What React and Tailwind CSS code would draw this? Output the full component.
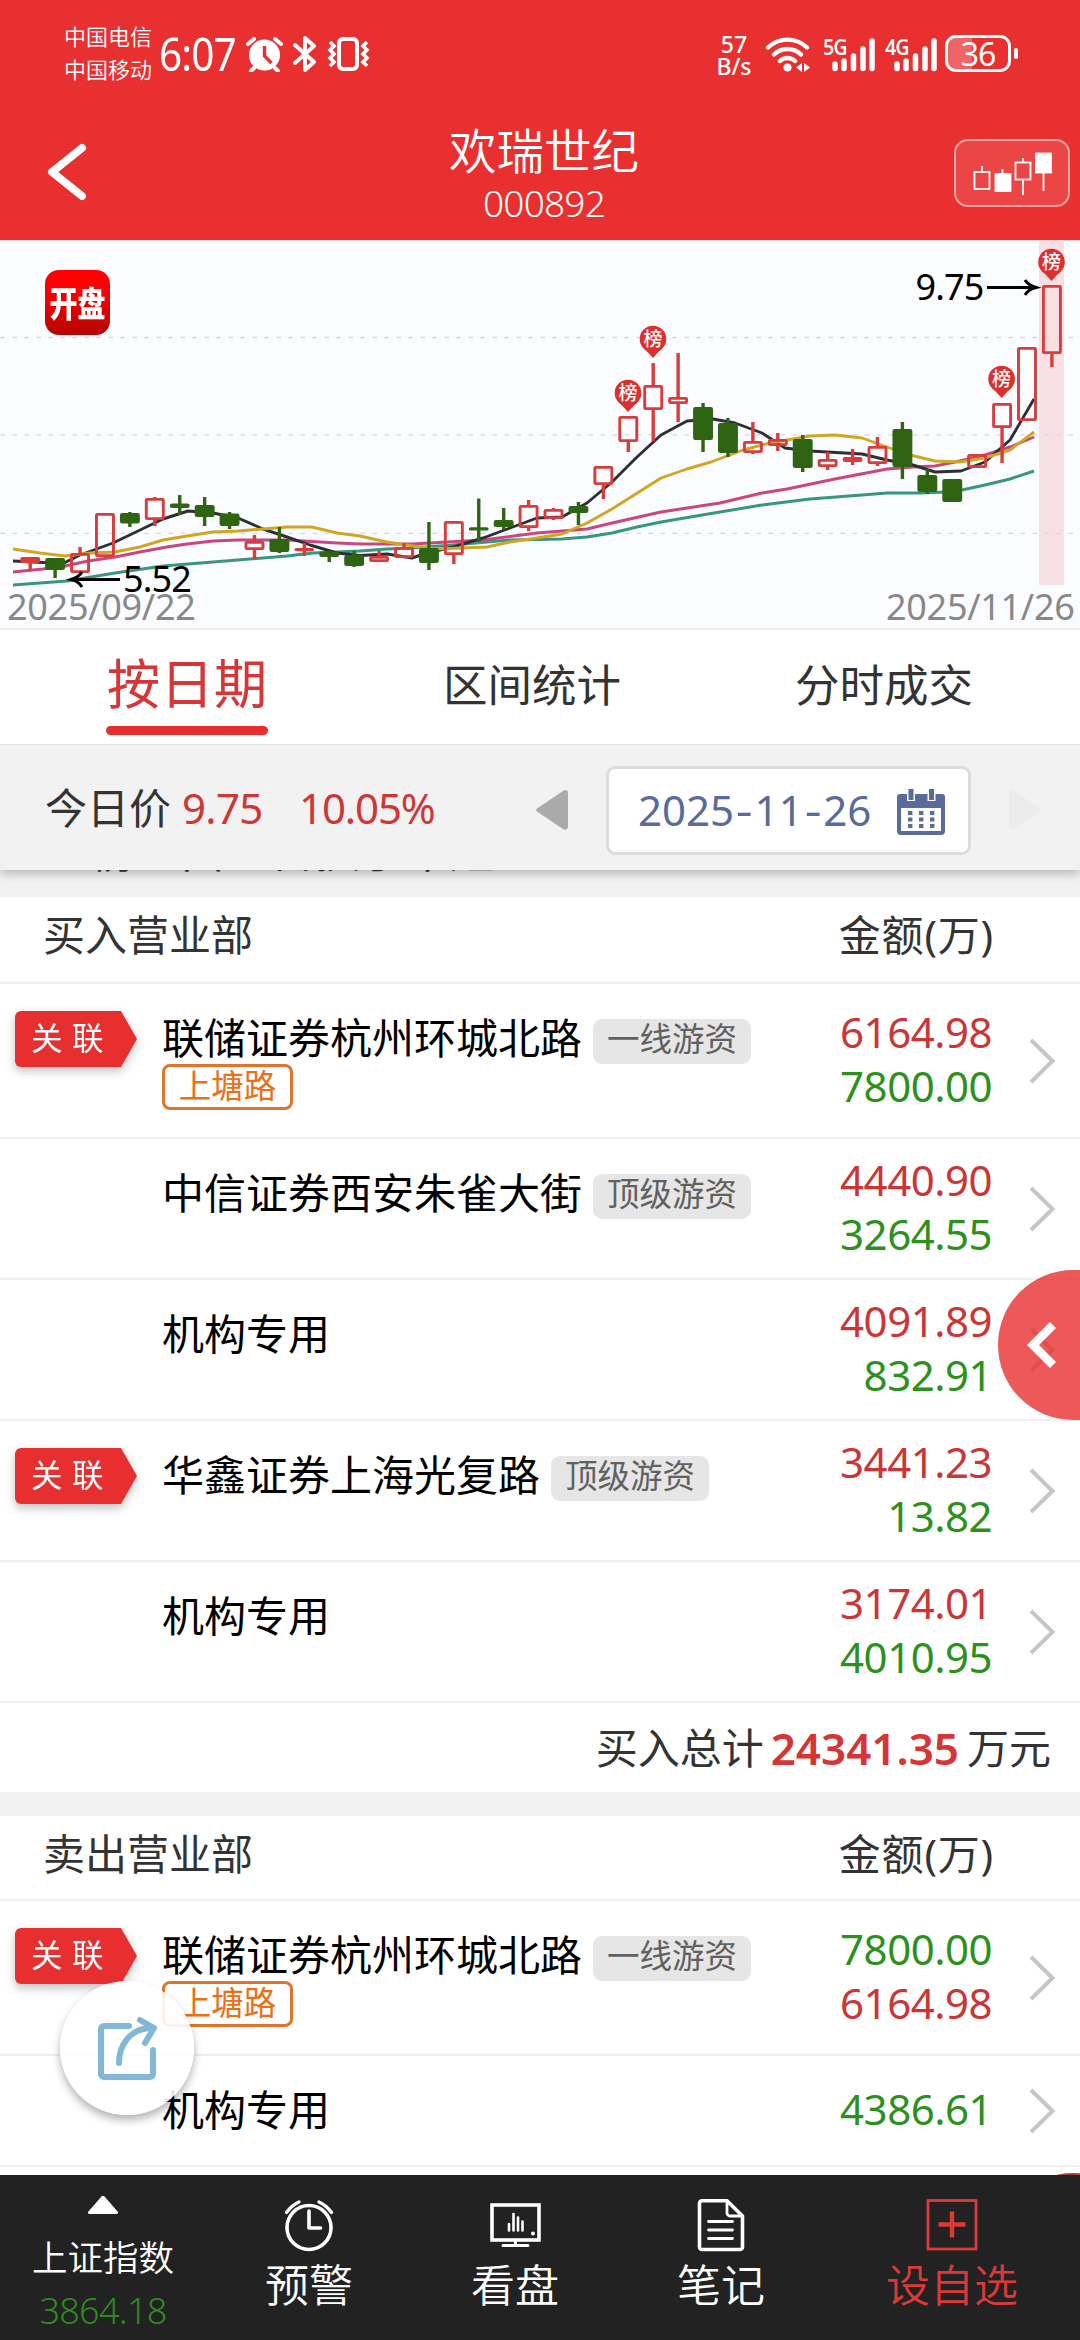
import React from "react";

const RED = "#d83c3c";
const GREEN = "#2f6412";

// [direction, high, bodyTop, bodyBottom, low]; "p" prices up, "g" down
const CANDLES = [
  ["p", 317, 317, 323, 331],
  ["g", 318, 318, 330, 338],
  ["p", 307, 313, 333, 333],
  ["p", 273, 273, 317, 317],
  ["g", 272, 273, 283.5, 287],
  ["p", 257, 258, 280, 286],
  ["g", 255, 263.5, 268, 275],
  ["g", 257, 265, 277, 286],
  ["g", 272, 273.5, 286, 289],
  ["p", 295, 301, 310, 319],
  ["g", 287, 299, 312, 313],
  ["p", 303, 308, 311, 316],
  ["g", 311, 311.5, 317, 322],
  ["g", 311, 315, 326, 327],
  ["p", 311, 316, 322, 322],
  ["p", 303, 307, 318, 318],
  ["g", 282, 308, 323, 330],
  ["p", 281, 281, 315, 324],
  ["g", 258.5, 287.3, 290.3, 302],
  ["g", 268, 280, 287, 290],
  ["p", 260, 265, 288, 291],
  ["p", 268, 269, 279, 280],
  ["g", 262, 266, 273, 285],
  ["p", 226, 226, 245, 259],
  ["p", 176, 176, 202, 212],
  ["p", 123, 145, 170, 201],
  ["p", 113, 157, 164, 182],
  ["g", 163, 167, 200, 212],
  ["g", 178, 183, 213, 217],
  ["p", 182, 201, 213, 214],
  ["p", 193, 199, 206, 211],
  ["g", 195, 199, 228, 232],
  ["p", 212, 219, 227, 230],
  ["p", 209, 217, 222, 225],
  ["p", 197, 206, 224, 226],
  ["g", 182, 189, 227, 239],
  ["g", 229, 235, 252, 254],
  ["g", 239, 239, 262, 262],
  ["p", 214, 214, 228, 228],
  ["p", 163, 163, 188, 223],
  ["p", 107, 107, 181, 181],
  ["p", 45, 45, 114, 127],
];

const MA = [
  ["#3a9580", "13,345 67,341 115,333 163,326 213,322 287,316 313,313 360,311 387,309 412,308 453,305 510,300 562,299 587,297 612,293 637,287 661,282 720,272 762,265 810,259 862,255 887,253 920,253 947,252 962,250 985,245 1010,239 1034,231"],
  ["#c6487f", "13,332 43,329 65,326 88,321 115,317 140,312 167,307 187,304 213,301 238,300 287,300 337,303 360,304 412,304 483,300 537,293 587,289 612,283 661,272 687,268 720,263 762,253 787,249 835,239 887,229 913,227 935,226 960,221 985,215 1010,207 1034,197"],
  ["#2f2f33", "13,321 43,322.5 65,322.5 80,315 113,303 163,279 188,271 213,273 238,278 263,289 287,297 310,305 337,313 360,315.5 387,314 412,318 427,313 453,307 483,298 510,288 537,278 562,277 587,263 612,242 637,217 661,195 687,181 713,179 735,183 762,193 785,208 810,211 862,214 887,220 913,225 935,232 961,231 985,222 1010,200 1034,159"],
  ["#cfa724", "13,309 40,313 65,316 90,313 115,312 140,307 163,300 187,296 213,292 238,291 263,289 287,287 312,287 337,293 360,296 387,302 413,306 437,309 487,307 510,302 537,298 562,294 587,283 612,269 661,238 687,229 711,222 743,210 770,203 787,200 810,196 835,195 862,198 887,207 910,215 935,221 960,222 985,218 1010,210 1034,192"],
];

const BADGES = [[628, 153], [653, 99], [1001.6, 139], [1051.5, 22]];

function StatusBar() {
  return (
    <div className="flex h-[108px] shrink-0 items-start text-white">
      <div className="ml-[64px] mt-[20px] w-[90px] whitespace-nowrap text-[22px] font-[350] leading-[33px]">
        <div>中国电信</div>
        <div>中国移动</div>
      </div>
      <div className="ml-[5px] mt-[26px] w-[81px] origin-left scale-x-90 text-[45px] leading-[56px] tracking-[-1px]">6:07</div>
      <svg className="ml-[4px] mt-[35px]" width="40" height="37" viewBox="0 0 40 37" fill="#fff" stroke="#fff">
        <circle cx="20.500" cy="20" r="15.500" stroke="none" />
        <path d="M4 9l6-5M37 9l-6-5M10 33l-3 3M31 33l3 3" strokeWidth="4" strokeLinecap="round" fill="none" />
        <path d="M20.500 11v10l7 7" stroke="#e93030" strokeWidth="3.400" fill="none" />
      </svg>
      <svg className="ml-[8px] mt-[35px]" width="26" height="38" viewBox="0 0 26 38" fill="none" stroke="#fff" strokeWidth="4" strokeLinejoin="round" strokeLinecap="round">
        <path d="M3 10l19 17-9 8V3l9 8L3 28" />
      </svg>
      <svg className="ml-[9px] mt-[35px]" width="45" height="38" viewBox="0 0 45 38" fill="none" stroke="#fff" strokeWidth="4">
        <rect x="12" y="4" width="18" height="30" rx="4" />
        <path d="M3 7l4 4-4 4 4 4-4 4 4 4-4 4M40 7l-4 4 4 4-4 4 4 4-4 4 4 4" strokeWidth="3.600" />
      </svg>
      <div className="grow" />
      <div className="mr-[12px] mt-[33px] w-[38px] text-center text-[23px] font-medium leading-[22px]">
        <div>57</div>
        <div>B/s</div>
      </div>
      <svg className="mr-[4px] mt-[35px]" width="48" height="38" viewBox="0 0 48 38" fill="none" stroke="#fff" strokeWidth="4.400" strokeLinecap="round">
        <path d="M3 12.500a28 28 0 0 1 39 0M9 19.500a19.500 19.500 0 0 1 27 0M15 26a11 11 0 0 1 15 0" />
        <circle cx="22.500" cy="32.500" r="4" fill="#fff" stroke="none" />
        <path d="M31 32.500l6-4.500v9zM39 28l6 4.500-6 4.500z" fill="#fff" stroke="none" />
      </svg>
      {["5G", "4G"].map((g) => (
        <div key={g} className="relative ml-[6px] mt-[34px] h-[40px] w-[56px]">
          <span className="absolute left-0 top-0 origin-left scale-x-90 text-[22px] font-semibold leading-[24px] tracking-[-1.2px]">{g}</span>
          <svg className="absolute left-[8px] top-[2px]" width="46" height="38" viewBox="0 0 46 38" stroke="#fff" strokeWidth="5.500" strokeLinecap="round">
            <path d="M4 28v4.500M13 25v7.500M22.500 20v12.500M32 13v19.500M41 5v27.500" />
          </svg>
        </div>
      ))}
      <div className="ml-[4px] mt-[35px] flex h-[37px] w-[66px] items-center justify-center rounded-[11px] border-[3px] border-white bg-[linear-gradient(90deg,#ef6464_40%,#e93030_40%)] text-[32px] leading-none tracking-[-1px]">36</div>
      <div className="ml-[3px] mr-[62px] mt-[48px] h-[11px] w-[4px] rounded-full bg-white" />
    </div>
  );
}

function TitleBar() {
  return (
    <div className="flex h-[132px] shrink-0 text-white">
      <svg className="ml-[44px] mt-[34px]" width="48" height="60" viewBox="0 0 48 60" fill="none" stroke="#fff" strokeWidth="8" strokeLinecap="round" strokeLinejoin="round">
        <path d="M38 6L8 30l30 24" />
      </svg>
      <div className="grow pl-[42px] text-center font-[350]">
        <div className="mt-[11px] text-[47.500px] leading-[64px]">欢瑞世纪</div>
        <div className="mt-[-4px] text-[37px] leading-[48px] tracking-[-0.800px]">000892</div>
      </div>
      <div className="mr-[10px] mt-[31px] h-[68px] w-[116px] rounded-[14px] border-2 border-[#f6a5a5] bg-[#eb4545]">
        <svg width="112" height="64" viewBox="956 141 112 64" fill="none" stroke="#fff" strokeWidth="1.800">
          <path d="M982 166v6M1002.500 169v6M1023 158v5M1023 179v16M1043.500 173v18" />
          <rect x="974.500" y="172" width="15" height="17" />
          <rect x="995.500" y="174" width="15" height="17" fill="#fff" />
          <rect x="1015.500" y="162.500" width="15" height="17" />
          <rect x="1036" y="153.500" width="15" height="19" fill="#fff" />
        </svg>
      </div>
    </div>
  );
}

function Chart() {
  return (
    <div className="relative h-[390px] shrink-0 border-b-2 border-t border-b-[#ececec] border-t-[#fbd9d9] bg-[#fbfcff]">
      <svg className="absolute left-0 top-[-1px]" width="1080" height="389" viewBox="0 0 1080 389">
        <rect x="1039" y="1" width="25" height="344" fill="#f7dfe4" />
        {[97.5, 194.8, 293.3].map((y) => (
          <line key={y} x1="0.500" x2="1074" y1={y} y2={y} stroke="#d5d6da" strokeWidth="1.300" strokeDasharray="4.500 7.500" />
        ))}
        {MA.map(([c, pts]) => (
          <polyline key={c} points={pts} fill="none" stroke={c} strokeWidth="2.900" strokeLinejoin="round" />
        ))}
        {CANDLES.map(([d, hi, top, bot, lo], i) => {
          const x = 30.2 + i * 24.92;
          const up = d === "p";
          return (
            <g key={i} stroke={up ? RED : GREEN} strokeWidth="2.900">
              {hi < top && <line x1={x} x2={x} y1={hi} y2={top + 1} strokeWidth="3.400" />}
              {lo > bot && <line x1={x} x2={x} y1={bot - 1} y2={lo} strokeWidth="3.400" />}
              <rect x={x - 8.5} y={top + 1.4} width="17" height={Math.max(bot - top - 2.8, 0.4)} fill={up ? "none" : GREEN} rx="0.800" />
            </g>
          );
        })}
        <rect x="22" y="318" width="17" height="4" fill={RED} />
        {BADGES.map(([x, y]) => (
          <g key={x}>
            <path d={`M${x - 10} ${y + 8}L${x} ${y + 19}L${x + 10} ${y + 8}z`} fill="#de2f2f" />
            <circle cx={x} cy={y} r="13.300" fill="#de2f2f" />
            <text x={x} y={y + 7} fontSize="19" fontWeight="500" fill="#fff" textAnchor="middle">榜</text>
          </g>
        ))}
        <path d="M120 339.500H74M82 332q-3 5-11 7.500q8 2 11 7.500" fill="none" stroke="#000" strokeWidth="3" />
        <path d="M987 47.500h46M1025 40q3 5 11 7.500q-8 2-11 7.500" fill="none" stroke="#000" strokeWidth="3" />
        <text x="123" y="351.500" fontSize="36" fill="#000" letterSpacing="-0.900">5.52</text>
        <text x="915.500" y="59.500" fontSize="36" fill="#000" letterSpacing="-0.900">9.75</text>
        <text x="7" y="379.500" fontSize="36" fill="#888" letterSpacing="-0.300">2025/09/22</text>
        <text x="886" y="379.500" fontSize="36" fill="#888" letterSpacing="-0.300">2025/11/26</text>
      </svg>
      <div className="absolute left-[45px] top-[29px] flex h-[65px] w-[65px] items-center justify-center rounded-[14px] bg-[linear-gradient(180deg,#ff0000,#fb0202_30%,#b40404)]">
        <span className="scale-y-125 whitespace-nowrap text-[28px] font-black leading-none text-white">开盘</span>
      </div>
    </div>
  );
}

function Tabs() {
  return (
    <div className="flex h-[115px] shrink-0 border-b border-[#e2e2e2] bg-white pl-[11px] text-[#333]">
      <div className="flex w-[352px] flex-col items-center">
        <div className="mt-[16px] text-[53.500px] leading-[76px] text-[#d83636]">按日期</div>
        <div className="mt-[4px] h-[9px] w-[162px] rounded-full bg-[#e82f2f]" />
      </div>
      <div className="w-[338px] text-center text-[44.500px] leading-[109px]">区间统计</div>
      <div className="w-[366px] text-center text-[44.500px] leading-[109px]">分时成交</div>
    </div>
  );
}

function Calendar() {
  return (
    <svg className="mt-[4px]" width="48" height="46" viewBox="0 0 48 46" fill="#5a6b9b">
      <path fillRule="evenodd" d="M3 5h42a3 3 0 0 1 3 3v34a4 4 0 0 1-4 4H4a4 4 0 0 1-4-4V8a3 3 0 0 1 3-3zM4 19v23h40V19z" />
      <path d="M10 0h8v12h-8zM30.500 0h8v12h-8z" fill="#fff" />
      <path d="M11.500 0h5v11h-5zM32 0h5v11h-5z" />
      {[22, 28.5, 35].map((y) => [11, 22, 33].map((x) => <rect key={x + "-" + y} x={x} y={y} width="4.400" height="4" />))}
    </svg>
  );
}

function PriceBar() {
  return (
    <>
      <div className="relative z-10 flex h-[125px] shrink-0 items-center bg-[#f2f2f2] pl-[45px] text-[42px] leading-[60px] shadow-[0_3px_10px_rgba(0,0,0,0.28)] [clip-path:inset(0_0_-24px_0)]">
        <div className="w-[126px] text-[#333]">今日价</div>
        <div className="ml-[11px] w-[117px] tracking-[-0.700px] text-[#cf3636]">9.75</div>
        <div className="w-[237px] tracking-[-1.100px] text-[#cf3636]">10.05%</div>
        <svg className="mt-[5px]" width="32" height="42" viewBox="0 0 32 42" fill="#aaa"><path d="M29 1a3 3 0 0 1 3 3v34a3 3 0 0 1-5 2L1 22.500a2 2 0 0 1 0-3L27 2z" /></svg>
        <div className="ml-[38px] mt-[5px] flex h-[89px] w-[365px] items-center rounded-[9px] border-[3px] border-[#dcdcdc] bg-white pl-[29px]">
          <div className="w-[259px] text-[#5a6b9b]">2025<Dash />11<Dash />26</div>
          <Calendar />
        </div>
        <svg className="ml-[38px] mt-[5px]" width="32" height="42" viewBox="0 0 32 42" fill="#ececec"><path d="M3 1a3 3 0 0 0-3 3v34a3 3 0 0 0 5 2l26-17.500a2 2 0 0 0 0-3L5 2z" /></svg>
      </div>
      <div className="h-[27px] shrink-0 overflow-hidden bg-[#f2f2f2]">
        <div className="mt-[-49px] pl-[45px] text-[45px] leading-[60px] text-[#333]">上榜理由：日换手率超20%</div>
      </div>
    </>
  );
}

function Dash() {
  return <span className="inline-block w-[20.500px] scale-x-125 text-center">-</span>;
}

function SectionHeader({ title, tall }) {
  return (
    <div className={`flex shrink-0 justify-between border-b-2 border-[#efefef] bg-white pl-[43px] pr-[86px] text-[42px] text-[#333] ${tall ? "h-[87px] leading-[76px]" : "h-[85px] leading-[75px]"}`}>
      <span>{title}</span>
      <span className="tracking-[0.800px]">金额(万)</span>
    </div>
  );
}

const HEIGHTS = { tall: "h-[155px]", mid: "h-[141px]", short: "h-[111px]" };

function Row({ name, tag, alias, linked, values, size = "mid" }) {
  return (
    <div className={`flex shrink-0 border-b-2 border-[#efefef] bg-white ${HEIGHTS[size]}`}>
      <div className="w-[162px] pt-[27px]">
        {linked && (
          <div className="ml-[15px] w-[122px] drop-shadow-[0_4px_5px_rgba(0,0,0,0.25)]">
            <div className="flex h-[56px] items-center rounded-l-[6px] bg-[#e82f2f] pb-[2px] pl-[16px] text-[31.500px] leading-none tracking-[9.500px] text-white [clip-path:polygon(0_0,106px_0,100%_50%,106px_100%,0_100%)]">关联</div>
          </div>
        )}
      </div>
      <div className="grow pt-[27px]">
        <div className="flex items-center">
          <span className="text-[42px] leading-[53px] text-black">{name}</span>
          {tag && <span className="ml-[11px] mt-[8px] h-[45px] rounded-[9px] bg-[#e6e6e6] px-[14px] text-[32.500px] leading-[40px] text-[#606060]">{tag}</span>}
        </div>
        {alias && <div className="h-[46px] w-[131px] rounded-[8px] border-[3px] border-[#df742a] text-center text-[32.500px] leading-[38px] text-[#ea6f16]">{alias}</div>}
      </div>
      <div className="flex flex-col justify-center pb-[4px] text-right text-[42px] leading-[54px] tracking-[-0.500px]">
        {values.map(([v, up], i) => (
          <div key={i} className={up ? "text-[#cc3535]" : "text-[#2c911c]"}>{v}</div>
        ))}
      </div>
      <div className="flex w-[88px] items-center pl-[37px]">
        <svg width="28" height="46" viewBox="0 0 28 46" fill="none" stroke="#c6c6c6" strokeWidth="4"><path d="M2 2l21.500 21L2 44" /></svg>
      </div>
    </div>
  );
}

function FooterItem({ label, width, color, children }) {
  return (
    <div className={`flex flex-col items-center pt-[22px] ${width} ${color}`}>
      <svg width="56" height="56" viewBox="0 0 56 56" fill="none" stroke="currentColor" strokeLinecap="round" strokeLinejoin="round">{children}</svg>
      <div className="mt-[2px] text-[44px] font-[350] leading-[60px]">{label}</div>
    </div>
  );
}

function Footer() {
  return (
    <div className="relative z-20 flex h-[165px] shrink-0 bg-[#222] text-white">
      <div className="flex w-[206px] flex-col items-center font-[350]">
        <svg className="mt-[20px]" width="32" height="20" viewBox="0 0 32 20" fill="#fff"><path d="M14.500 1.500q1.500-1.500 3 0L31 17q.5 2-1.500 2h-27Q.5 19 1 17z" /></svg>
        <div className="mt-[16px] text-[35.500px] leading-[52px]">上证指数</div>
        <div className="text-[36px] leading-[56px] tracking-[-0.700px] text-[#2f8a22]">3864.18</div>
      </div>
      <FooterItem label="预警" width="w-[206px]" color="text-white">
        <circle cx="28" cy="30.500" r="22" strokeWidth="3.600" />
        <path d="M28 14v17h11.500" strokeWidth="3.600" />
        <path d="M5.500 15.500Q11 8 18 5M50.500 15.500Q45 8 38 5" strokeWidth="3.400" />
      </FooterItem>
      <FooterItem label="看盘" width="w-[206px]" color="text-white">
        <rect x="5" y="8" width="47" height="35" strokeWidth="3.600" strokeLinejoin="miter" />
        <path d="M28.500 43v5M16 48.500h25" strokeWidth="3" />
        <path d="M22 27v6.500M26.500 17v16.500M31 20.500v13M35.500 24.500v9" strokeWidth="2.600" />
        <circle cx="46" cy="36.500" r="2" fill="currentColor" stroke="none" />
      </FooterItem>
      <FooterItem label="笔记" width="w-[206px]" color="text-white">
        <path d="M9 3.700h25L49.500 19v31a2.500 2.500 0 0 1-2.500 2.500H9a2.500 2.500 0 0 1-2.500-2.500V6.200A2.500 2.500 0 0 1 9 3.700z" strokeWidth="3.600" />
        <path d="M34 4v12a3 3 0 0 0 3 3h12" strokeWidth="2.800" />
        <path d="M15.500 24.500h24M15.500 33h24M15.500 41.500h24" strokeWidth="2.800" />
      </FooterItem>
      <FooterItem label="设自选" width="w-[256px]" color="text-[#dc3a3a]">
        <rect x="4" y="3.500" width="48" height="48.500" strokeWidth="2.800" strokeLinejoin="miter" />
        <path d="M28 14.500v26M14.500 27.500h27" strokeWidth="4.400" strokeLinecap="butt" />
      </FooterItem>
    </div>
  );
}

export default function App() {
  return (
    <div className="relative flex h-[2340px] w-[1080px] flex-col overflow-hidden bg-white font-['Noto_Sans','Noto_Sans_CJK_SC',sans-serif]">
      <div className="flex h-[240px] shrink-0 flex-col bg-[#e93030]">
        <StatusBar />
        <TitleBar />
      </div>
      <Chart />
      <Tabs />
      <PriceBar />
      <SectionHeader title="买入营业部" tall />
      <Row size="tall" linked name="联储证券杭州环城北路" tag="一线游资" alias="上塘路" values={[["6164.98", true], ["7800.00", false]]} />
      <Row name="中信证券西安朱雀大街" tag="顶级游资" values={[["4440.90", true], ["3264.55", false]]} />
      <Row name="机构专用" values={[["4091.89", true], ["832.91", false]]} />
      <Row linked name="华鑫证券上海光复路" tag="顶级游资" values={[["3441.23", true], ["13.82", false]]} />
      <Row name="机构专用" values={[["3174.01", true], ["4010.95", false]]} />
      <div className="flex h-[89px] shrink-0 items-center justify-end bg-white pr-[29px] text-[42px] leading-[60px] text-[#333]">
        <span>买入总计</span>
        <span className="ml-[7px] mr-[8px] text-[44px] font-semibold text-[#d53535]">24341.35</span>
        <span>万元</span>
      </div>
      <div className="h-[24px] shrink-0 bg-[#f2f2f2]" />
      <SectionHeader title="卖出营业部" />
      <Row size="tall" linked name="联储证券杭州环城北路" tag="一线游资" alias="上塘路" values={[["7800.00", false], ["6164.98", true]]} />
      <Row size="short" name="机构专用" values={[["4386.61", false]]} />
      <div className="grow bg-white" />
      <Footer />

      <div className="absolute left-[998px] top-[1270px] flex h-[150px] w-[82px] items-center rounded-l-[75px] bg-[#e93030]/80 pl-[28px]">
        <svg width="32" height="50" viewBox="0 0 32 50" fill="none" stroke="#fff" strokeWidth="8.500"><path d="M27 5L7 25l20 20" /></svg>
      </div>
      <div className="absolute left-[998px] top-[2173px] h-[150px] w-[150px] rounded-full bg-[#b04040]" />
      <div className="absolute left-[60px] top-[1981px] flex h-[134px] w-[134px] items-center justify-center rounded-full bg-white/90 shadow-[0_5px_9px_rgba(0,0,0,0.3)]">
        <svg width="64" height="68" viewBox="0 0 64 68" fill="none" stroke="#82b8d6" strokeWidth="6" strokeLinecap="round" strokeLinejoin="round">
          <path d="M34 12H9a3 3 0 0 0-3 3v45a3 3 0 0 0 3 3h46a3 3 0 0 0 3-3V36" />
          <path d="M24 49C24 31 35 15 55 14" />
          <path d="M45 6l14 8-9 15" />
        </svg>
      </div>
    </div>
  );
}
